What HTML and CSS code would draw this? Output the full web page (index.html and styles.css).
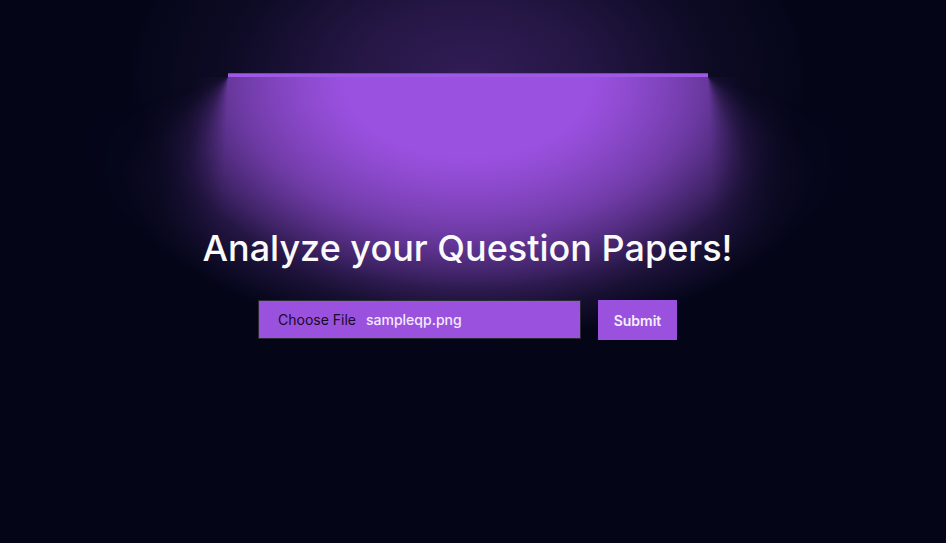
FILE: index.html
```html
<!DOCTYPE html>
<html lang="en">
<head>
<meta charset="utf-8">
<title>Analyze your Question Papers</title>
<link rel="stylesheet" href="styles.css">
</head>
<body>
<main class="stage">
  <div class="glow-top"></div>
  <div class="glow-cone"></div>
  <div class="glow-core"></div>
  <div class="lamp-bar"></div>
  <section class="content">
    <h1 class="title">Analyze your Question Papers!</h1>
    <form class="upload">
      <div class="file-field">
        <span class="file-btn">Choose File</span>
        <span class="file-name">sampleqp.png</span>
      </div>
      <button type="button" class="submit">Submit</button>
    </form>
  </section>
</main>
</body>
</html>
```

FILE: styles.css
```css
html, body {
  margin: 0;
  padding: 0;
  background: #040618;
  font-family: Inter, "Noto Sans", sans-serif;
}
.stage {
  position: relative;
  width: 946px;
  height: 543px;
  overflow: hidden;
  background: #040618;
}
.glow-top {
  position: absolute;
  inset: 0;
  background: radial-gradient(ellipse 340px 220px at 468px 77px, rgba(50,28,86,1) 0%, rgba(42,25,76,0.85) 35%, rgba(22,15,48,0.55) 70%, rgba(4,6,24,0) 100%);
}
.glow-cone {
  position: absolute;
  left: 0;
  right: 0;
  top: 77px;
  height: 320px;
  background-image:
    conic-gradient(from 90deg at 228px 0, #9b51e0 0deg, #9b51e0 92deg, rgba(155,81,224,0.4) 120deg, rgba(155,81,224,0.1) 145deg, rgba(155,81,224,0) 165deg, rgba(155,81,224,0) 360deg),
    conic-gradient(from 90deg at 240px 0, rgba(155,81,224,0) 0deg, rgba(155,81,224,0) 15deg, rgba(155,81,224,0.1) 35deg, rgba(155,81,224,0.4) 60deg, #9b51e0 88deg, #9b51e0 180deg, rgba(155,81,224,0) 180.01deg);
  background-size: 468px 100%, 478px 100%;
  background-position: 0 0, 468px 0;
  background-repeat: no-repeat;
  -webkit-mask-image: radial-gradient(ellipse 410px 265px at 468px 0, #000 30%, rgba(0,0,0,0.62) 58%, rgba(0,0,0,0.22) 80%, transparent 100%);
  mask-image: radial-gradient(ellipse 410px 265px at 468px 0, #000 30%, rgba(0,0,0,0.62) 58%, rgba(0,0,0,0.22) 80%, transparent 100%);
}
.glow-core {
  position: absolute;
  left: 0;
  right: 0;
  top: 77px;
  height: 240px;
  background: radial-gradient(ellipse 280px 200px at 468px 40px, rgba(155,81,224,0.4) 0%, rgba(155,81,224,0.2) 60%, rgba(155,81,224,0) 100%);
}
.lamp-bar {
  position: absolute;
  left: 228px;
  top: 73px;
  width: 480px;
  height: 4px;
  background: #a058e6;
  border-top: 1px solid #7a45b8;
  box-sizing: border-box;
}
.content {
  position: relative;
  display: flex;
  flex-direction: column;
  align-items: center;
  padding-top: 224px;
  padding-right: 11px;
}
.title {
  margin: 0;
  color: #fafafa;
  font-size: 36px;
  font-weight: 500;
  line-height: 48px;
}
.upload {
  display: flex;
  gap: 17px;
  margin-top: 28px;
}
.file-field {
  width: 302px;
  height: 37px;
  border: 1px solid #2a2a33;
  background: #9a52de;
  display: flex;
  align-items: center;
  padding-left: 19px;
  box-sizing: content-box;
  font-size: 14px;
}
.file-btn {
  color: #160a26;
  margin-right: 10px;
}
.file-name {
  color: #f3e9ff;
  font-weight: 500;
}
.submit {
  width: 79px;
  height: 40px;
  border: none;
  background: #9a52de;
  color: #f6efff;
  font-family: Inter, sans-serif;
  font-size: 14px;
  font-weight: 600;
  padding: 0;
}
```
